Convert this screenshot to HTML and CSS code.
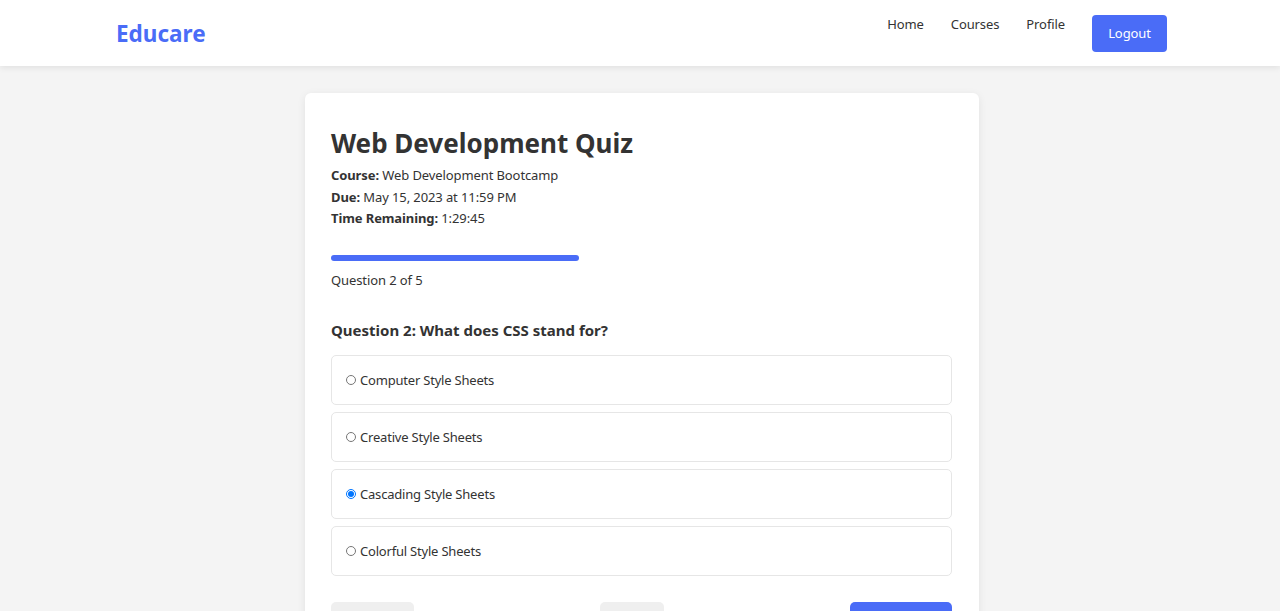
FILE: index.html
```html
<!DOCTYPE html>
<html lang="en">
<head>
<meta charset="utf-8">
<title>Educare - Quiz</title>
<link rel="stylesheet" href="styles.css">
</head>
<body>
<header class="site-header">
  <div class="header-inner">
    <a class="logo" href="#">Educare</a>
    <nav class="nav">
      <a class="nav-link" href="#">Home</a>
      <a class="nav-link" href="#">Courses</a>
      <a class="nav-link" href="#">Profile</a>
      <button class="btn-logout">Logout</button>
    </nav>
  </div>
</header>
<main class="main">
  <section class="card">
    <h1 class="quiz-title">Web Development Quiz</h1>
    <p class="meta"><strong>Course:</strong> Web Development Bootcamp</p>
    <p class="meta"><strong>Due:</strong> May 15, 2023 at 11:59 PM</p>
    <p class="meta"><strong>Time Remaining:</strong> 1:29:45</p>

    <div class="progress"><div class="progress-fill" style="width:40%"></div></div>
    <p class="progress-label">Question 2 of 5</p>

    <h2 class="question">Question 2: What does CSS stand for?</h2>
    <div class="options">
      <label class="option"><input type="radio" name="q2"> Computer Style Sheets</label>
      <label class="option"><input type="radio" name="q2"> Creative Style Sheets</label>
      <label class="option"><input type="radio" name="q2" checked> Cascading Style Sheets</label>
      <label class="option"><input type="radio" name="q2"> Colorful Style Sheets</label>
    </div>

    <div class="actions">
      <button class="btn btn-gray btn-prev">Previous</button>
      <button class="btn btn-gray btn-flag">Flag</button>
      <button class="btn btn-primary btn-next">Next</button>
    </div>
  </section>
</main>
</body>
</html>
```

FILE: styles.css
```css
* { box-sizing: border-box; }
html, body { margin: 0; padding: 0; }
body {
  font-family: "Noto Sans", "Open Sans", sans-serif;
  background: #f4f4f4;
  color: #333;
  font-size: 13px;
}
.site-header {
  background: #fff;
  height: 66px;
  box-shadow: 0 2px 6px rgba(0,0,0,0.08);
}
.header-inner {
  height: 100%;
  padding: 0 113px 0 116px;
  display: flex;
  align-items: center;
  justify-content: space-between;
}
.logo {
  font-size: 22.5px;
  font-weight: 700;
  color: #4a6cf7;
  text-decoration: none;
  margin-top: 1px;
}
.nav {
  display: flex;
  align-items: center;
}
.nav-link {
  color: #333;
  text-decoration: none;
  font-size: 13px;
  letter-spacing: -0.1px;
  margin-right: 27px;
  margin-bottom: 18px;
}
.btn-logout {
  font-family: inherit;
  background: #4a6cf7;
  color: #fff;
  border: none;
  border-radius: 4px;
  height: 37px;
  width: 75px;
  font-size: 13px;
  letter-spacing: -0.1px;
  cursor: pointer;
}
.main {
  display: flex;
  justify-content: center;
  padding-top: 27px;
  padding-left: 4px;
}
.card {
  width: 674px;
  background: #fff;
  border-radius: 6px;
  box-shadow: 0 2px 8px rgba(0,0,0,0.08);
  padding: 26px 27px 30px 26px;
}
.quiz-title {
  font-size: 26px;
  font-weight: 700;
  margin: 6px 0 4px;
  line-height: 36px;
}
.meta {
  margin: 0;
  line-height: 21.5px;
  font-size: 13px;
  letter-spacing: -0.1px;
}
.progress {
  margin-top: 25px;
  height: 6px;
  background: transparent;
  border-radius: 3px;
}
.progress-fill {
  height: 100%;
  background: #4a6cf7;
  border-radius: 3px;
}
.progress-label {
  margin: 9px 0 0;
  font-size: 13px;
  letter-spacing: -0.1px;
  line-height: 21px;
}
.question {
  font-size: 15px;
  font-weight: 700;
  margin: 27px 0 13px;
  line-height: 24px;
}
.options {
  display: flex;
  flex-direction: column;
  gap: 7px;
}
.option {
  display: flex;
  align-items: center;
  height: 50px;
  border: 1px solid #e6e6e6;
  border-radius: 5px;
  padding: 0 14px;
  font-size: 13px;
  letter-spacing: -0.2px;
  gap: 4px;
}
.option input {
  margin: 0;
  width: 10px;
  height: 10px;
}
.actions {
  display: flex;
  justify-content: space-between;
  margin-top: 26px;
}
.btn {
  font-family: inherit;
  font-size: 13px;
  border: none;
  border-radius: 5px;
  height: 38px;
}
.btn-gray { background: #efefef; color: #333; }
.btn-primary { background: #4a6cf7; color: #fff; }
.btn-prev { width: 83px; }
.btn-flag { width: 64px; }
.btn-next { width: 102px; }
```
